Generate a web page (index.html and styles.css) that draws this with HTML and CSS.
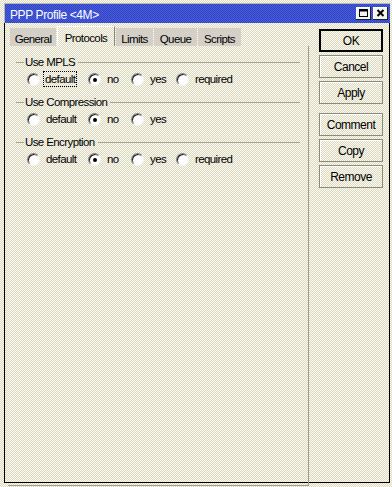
FILE: index.html
```html
<!DOCTYPE html>
<html lang="en">
<head>
  <meta charset="UTF-8" />
  <title>PPP Profile &lt;4M&gt;</title>
  <link rel="stylesheet" href="styles.css">
</head>
<body>
  <div class="window">
    <div class="titlebar">
      <span class="title">PPP Profile &lt;4M&gt;</span>
      <div class="title-btns">
        <span class="tbtn">
          <svg width="15" height="13" viewBox="0 0 15 13">
            <rect x="3.5" y="2.5" width="8" height="7" fill="none" stroke="#000"/>
            <line x1="3" y1="3.5" x2="12" y2="3.5" stroke="#000" stroke-width="2"/>
          </svg>
        </span>
        <span class="tbtn">
          <svg width="15" height="13" viewBox="0 0 15 13">
            <path d="M4.5 3 L10.5 9 M10.5 3 L4.5 9" stroke="#000" stroke-width="2" fill="none"/>
          </svg>
        </span>
      </div>
    </div>

    <div class="body">
      <div class="main">
        <div class="tabs">
          <span class="tab tab-general">General</span>
          <span class="tab active tab-protocols">Protocols</span>
          <span class="tab tab-limits">Limits</span>
          <span class="tab tab-queue">Queue</span>
          <span class="tab tab-scripts">Scripts</span>
        </div>

        <div class="panel">
          <div class="group">
            <div class="legend"><span class="line-short"></span><span class="legend-text">Use MPLS</span><span class="line"></span></div>
            <div class="options">
              <label class="opt opt-default"><span class="radio"></span><span class="focus">default</span></label>
              <label class="opt opt-no"><span class="radio checked"></span><span>no</span></label>
              <label class="opt opt-yes"><span class="radio"></span><span>yes</span></label>
              <label class="opt"><span class="radio"></span><span>required</span></label>
            </div>
          </div>

          <div class="group">
            <div class="legend"><span class="line-short"></span><span class="legend-text">Use Compression</span><span class="line"></span></div>
            <div class="options">
              <label class="opt opt-default"><span class="radio"></span><span>default</span></label>
              <label class="opt opt-no"><span class="radio checked"></span><span>no</span></label>
              <label class="opt opt-yes"><span class="radio"></span><span>yes</span></label>
            </div>
          </div>

          <div class="group">
            <div class="legend"><span class="line-short"></span><span class="legend-text">Use Encryption</span><span class="line"></span></div>
            <div class="options">
              <label class="opt opt-default"><span class="radio"></span><span>default</span></label>
              <label class="opt opt-no"><span class="radio checked"></span><span>no</span></label>
              <label class="opt opt-yes"><span class="radio"></span><span>yes</span></label>
              <label class="opt"><span class="radio"></span><span>required</span></label>
            </div>
          </div>
        </div>
      </div>

      <div class="side">
        <button class="btn btn-default">OK</button>
        <button class="btn">Cancel</button>
        <button class="btn">Apply</button>
        <button class="btn btn-sep">Comment</button>
        <button class="btn">Copy</button>
        <button class="btn">Remove</button>
      </div>
    </div>
  </div>
</body>
</html>
```

FILE: styles.css
```css
body {
  margin: 0;
  padding: 0;
  font-family: 'Liberation Sans', Arial, sans-serif;
  font-size: 11.5px;
  letter-spacing: -0.6px;
  color: #000;
  background-color: #ecead8;
  background-image: repeating-conic-gradient(#dcd8c0 0% 25%, #fcfcf4 0% 50%);
  background-size: 2px 2px;
  height: 487px;
  overflow: hidden;
}

.window {
  margin: 3px 0 0 4px;
  width: 386px;
}

.titlebar {
  height: 19px;
  border-top: 1px solid #b8b8b0;
  border-left: 1px solid #b8b8b0;
  background-color: #3e50d0;
  background-image: repeating-conic-gradient(#3044c8 0% 25%, #4a5cd8 0% 50%);
  background-size: 2px 2px;
  display: flex;
  align-items: center;
  color: #fff;
}

.title {
  padding: 2px 0 0 5px;
  line-height: 14px;
  font-size: 12px;
  letter-spacing: -0.4px;
}

.title-btns {
  margin-left: auto;
  display: flex;
  gap: 2px;
  padding-right: 2px;
}

.tbtn {
  width: 15px;
  height: 13px;
  background: #f4f4f0;
  box-shadow: inset -1px -1px 0 #202020, inset 1px 1px 0 #fff;
  display: block;
}

.tbtn svg {
  display: block;
}

.body {
  height: 459px;
  border: 1px solid #000;
  border-top: none;
  display: flex;
}

.main {
  width: 304px;
}

.tabs {
  margin-top: 3px;
  height: 20px;
  padding-left: 5px;
  display: flex;
  align-items: flex-end;
  gap: 1px;
  line-height: 14px;
}

.tab {
  height: 18px;
  box-sizing: border-box;
  padding-top: 4px;
  text-align: center;
  background: #d4d0c8;
}

.tab.active {
  height: 20px;
  padding-top: 4px;
  background: transparent;
  border-left: 1px solid #fff;
  border-top: 1px solid #fff;
  border-right: 1px solid #8a8878;
}

.tab-general { width: 46px; }
.tab-protocols { width: 58px; }
.tab-limits { width: 37px; }
.tab-queue { width: 43px; }
.tab-scripts { width: 43px; }

.panel {
  margin-left: 3px;
  width: 300px;
  height: 430px;
  border-right: 1px solid #a09c84;
  border-bottom: 1px solid #a09c84;
  padding-top: 9px;
  box-sizing: content-box;
}

.group {
  margin: 0 0 9px 8px;
  line-height: 14px;
}

.legend {
  display: flex;
  align-items: center;
  height: 14px;
}

.line-short {
  width: 8px;
  height: 1px;
  margin-top: 1px;
  background: #a8a490;
}

.line {
  flex: 1;
  height: 1px;
  margin: 1px 8px 0 3px;
  background: #a8a490;
}

.legend-text {
  padding-left: 1px;
}

.options {
  margin-top: 3px;
  height: 14px;
  padding-left: 11px;
  display: flex;
  align-items: center;
}

.opt {
  display: flex;
  align-items: center;
  gap: 6px;
}

.opt-default { width: 61px; }
.opt-no { width: 43px; }
.opt-yes { width: 45px; }

.radio {
  width: 13px;
  height: 13px;
  box-sizing: border-box;
  border-radius: 50%;
  background: #fff;
  border: 1px solid;
  border-color: #808080 #f4f4f4 #f4f4f4 #808080;
  box-shadow: inset 1px 1px 0 #202020;
  position: relative;
}

.radio.checked::after {
  content: "";
  position: absolute;
  left: 4px;
  top: 4px;
  width: 4px;
  height: 4px;
  border-radius: 50%;
  background: #000;
}

.focus {
  outline: 1px dotted #000;
  outline-offset: 0;
  padding: 0 1px;
  margin-left: -2px;
}

.side {
  padding: 6px 0 0 10px;
  display: flex;
  flex-direction: column;
  gap: 3px;
}

.btn {
  width: 64px;
  height: 23px;
  padding: 0;
  font-family: inherit;
  font-size: 12px;
  letter-spacing: -0.5px;
  color: #000;
  background: transparent;
  border: 1px solid #8c8a78;
  box-shadow: inset 1px 1px 0 #fff;
  border-radius: 0;
}

.btn-default {
  border-color: #000;
  box-shadow: inset 0 0 0 1px #000;
}

.btn-sep {
  margin-top: 6px;
}
```
